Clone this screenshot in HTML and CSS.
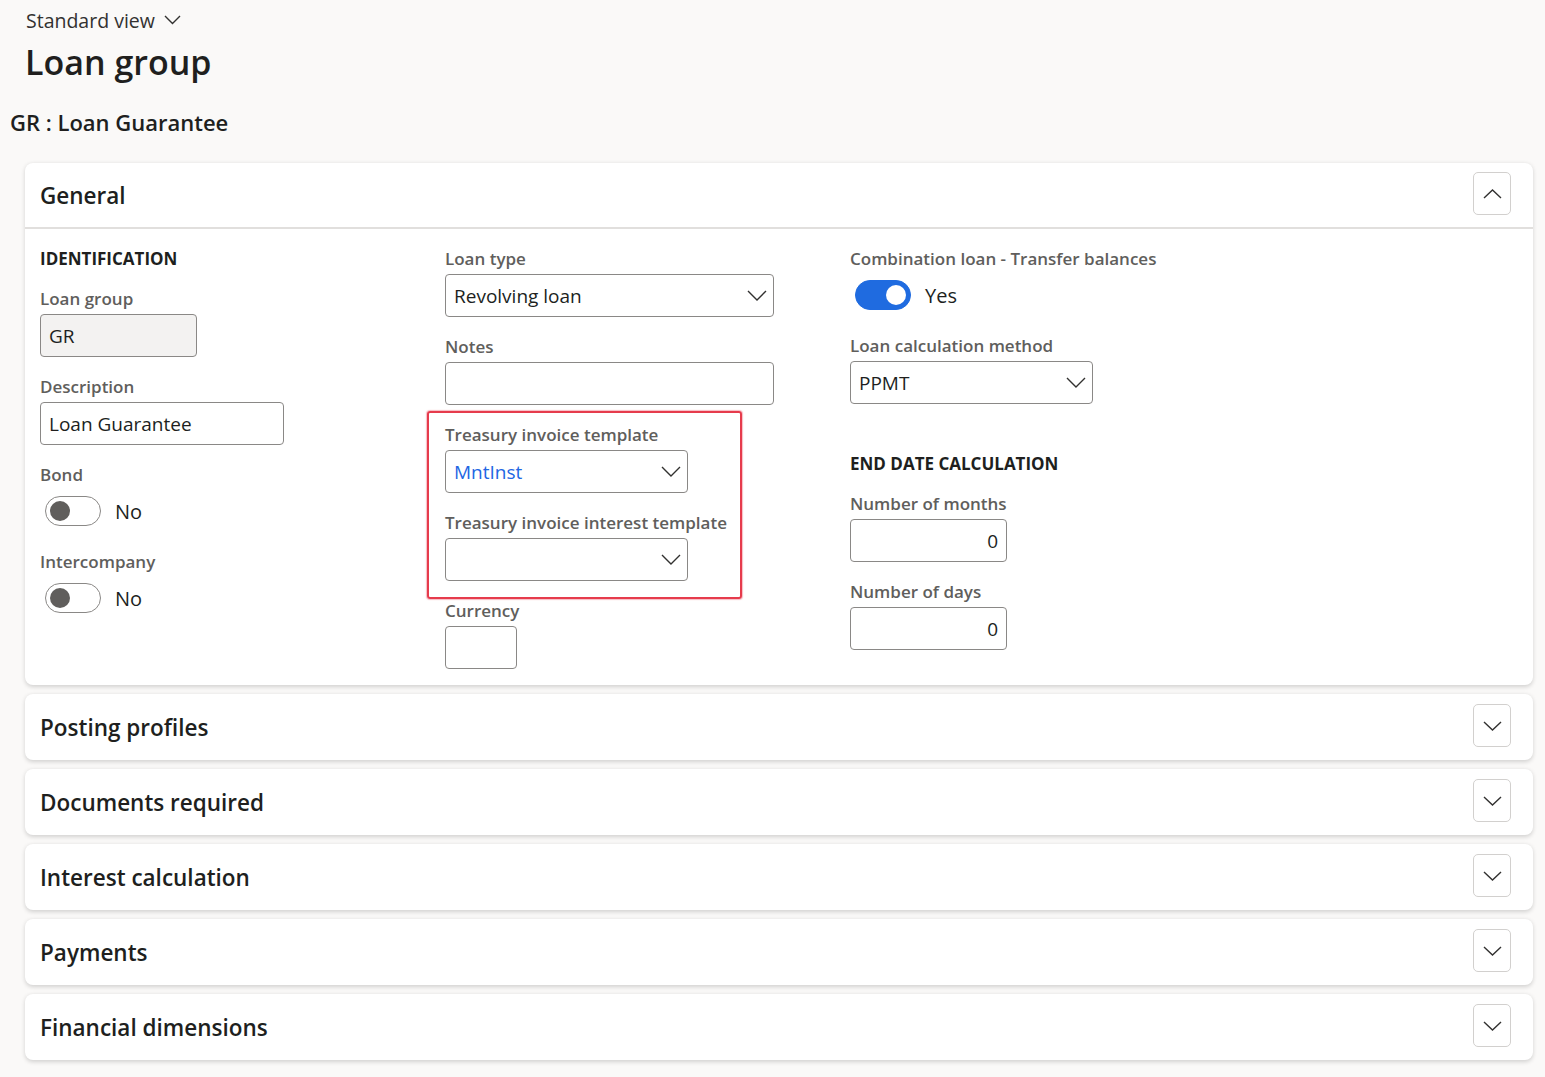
FILE: index.html
```html
<!DOCTYPE html>
<html>
<head>
	<title>Loan group</title>
	<link rel="stylesheet" href="styles.css">
</head>
<body>
<div class="page">
	<div class="view">Standard view
		<svg class="chev" width="17" height="10" viewBox="0 0 17 10"><polyline points="1,1 8.5,8.5 16,1"/></svg>
	</div>
	<h1 class="title">Loan group</h1>
	<h2 class="record">GR : Loan Guarantee</h2>

	<section class="card">
		<div class="card-head">
			<span class="card-title">General</span>
			<button class="fold"><svg width="19" height="10" viewBox="0 0 19 10"><polyline points="1,9 9.5,1 18,9"/></svg></button>
		</div>
		<div class="card-body">
			<div class="col">
				<div class="group-title">IDENTIFICATION</div>
				<div class="field">
					<label>Loan group</label>
					<div class="input disabled w157">GR</div>
				</div>
				<div class="field">
					<label>Description</label>
					<div class="input w244">Loan Guarantee</div>
				</div>
				<div class="field">
					<label>Bond</label>
					<div class="switch-row"><span class="switch"><span class="knob"></span></span><span>No</span></div>
				</div>
				<div class="field">
					<label>Intercompany</label>
					<div class="switch-row"><span class="switch"><span class="knob"></span></span><span>No</span></div>
				</div>
			</div>

			<div class="col">
				<div class="field">
					<label>Loan type</label>
					<div class="input select w329">Revolving loan
						<svg width="20" height="11" viewBox="0 0 20 11"><polyline points="1,1 10,10 19,1"/></svg></div>
				</div>
				<div class="field">
					<label>Notes</label>
					<div class="input w329"></div>
				</div>
				<div class="marked">
					<div class="field">
						<label>Treasury invoice template</label>
						<div class="input select w243 link">MntInst
							<svg width="20" height="11" viewBox="0 0 20 11"><polyline points="1,1 10,10 19,1"/></svg></div>
					</div>
					<div class="field">
						<label>Treasury invoice interest template</label>
						<div class="input select w243">
							<svg width="20" height="11" viewBox="0 0 20 11"><polyline points="1,1 10,10 19,1"/></svg></div>
					</div>
					<div class="mark"></div>
				</div>
				<div class="field">
					<label>Currency</label>
					<div class="input w72"></div>
				</div>
			</div>

			<div class="col">
				<div class="field">
					<label>Combination loan - Transfer balances</label>
					<div class="switch-row"><span class="switch on"><span class="knob"></span></span><span>Yes</span></div>
				</div>
				<div class="field">
					<label>Loan calculation method</label>
					<div class="input select w243">PPMT
						<svg width="20" height="11" viewBox="0 0 20 11"><polyline points="1,1 10,10 19,1"/></svg></div>
				</div>
				<div class="group-title spaced">END DATE CALCULATION</div>
				<div class="field">
					<label>Number of months</label>
					<div class="input num w157">0</div>
				</div>
				<div class="field">
					<label>Number of days</label>
					<div class="input num w157">0</div>
				</div>
			</div>
		</div>
	</section>

	<section class="card">
		<div class="card-head closed">
			<span class="card-title">Posting profiles</span>
			<button class="fold"><svg width="19" height="10" viewBox="0 0 19 10"><polyline points="1,1 9.5,9 18,1"/></svg></button>
		</div>
	</section>
	<section class="card">
		<div class="card-head closed">
			<span class="card-title">Documents required</span>
			<button class="fold"><svg width="19" height="10" viewBox="0 0 19 10"><polyline points="1,1 9.5,9 18,1"/></svg></button>
		</div>
	</section>
	<section class="card">
		<div class="card-head closed">
			<span class="card-title">Interest calculation</span>
			<button class="fold"><svg width="19" height="10" viewBox="0 0 19 10"><polyline points="1,1 9.5,9 18,1"/></svg></button>
		</div>
	</section>
	<section class="card">
		<div class="card-head closed">
			<span class="card-title">Payments</span>
			<button class="fold"><svg width="19" height="10" viewBox="0 0 19 10"><polyline points="1,1 9.5,9 18,1"/></svg></button>
		</div>
	</section>
	<section class="card">
		<div class="card-head closed">
			<span class="card-title">Financial dimensions</span>
			<button class="fold"><svg width="19" height="10" viewBox="0 0 19 10"><polyline points="1,1 9.5,9 18,1"/></svg></button>
		</div>
	</section>
</div>
</body>
</html>
```

FILE: styles.css
```css
html {
	background: #faf9f8;
}

body {
	margin: 0;
	font-family: "Open Sans", "Noto Sans", sans-serif;
	color: #201f1e;
}

.page {
	padding: 0 12px 20px 10px;
}

.view {
	display: flex;
	align-items: center;
	gap: 9px;
	margin: 0 0 0 16px;
	padding-top: 6px;
	height: 28px;
	font-size: 19.5px;
	color: #323130;
}

.chev polyline, .fold polyline, .select polyline {
	fill: none;
	stroke: #323130;
	stroke-width: 1.4;
}

.title {
	margin: 4px 0 0 15px;
	font-size: 34px;
	line-height: 48px;
	font-weight: 600;
}

.record {
	margin: 20px 0 0 0;
	font-size: 22px;
	line-height: 32px;
	font-weight: 600;
}

.card {
	margin: 25px 0 0 15px;
	background: white;
	border-radius: 8px;
	box-shadow: 0 1.5px 4px rgba(0, 0, 0, 0.16);
}

.card + .card {
	margin-top: 9px;
}

.card-head {
	display: flex;
	align-items: center;
	justify-content: space-between;
	height: 64px;
	padding: 0 22px 0 15px;
	border-bottom: 2px solid #e1dfdd;
}

.card-head.closed {
	height: 66px;
	border-bottom: none;
}

.card-title {
	font-size: 22.5px;
	font-weight: 600;
}

.fold {
	display: flex;
	align-items: center;
	justify-content: center;
	width: 38px;
	height: 43px;
	margin-top: -3px;
	background: white;
	border: 1px solid #d2d0ce;
	border-radius: 5px;
	padding: 0;
}

.card-body {
	display: grid;
	grid-template-columns: 405px 405px 405px;
	padding: 16px 15px 0;
}

.group-title {
	font-size: 17px;
	font-weight: 700;
	line-height: 27px;
	margin-bottom: 13px;
}

.group-title.spaced {
	margin-top: 46px;
}

.field {
	margin-bottom: 16px;
}

.field label {
	display: block;
	font-size: 17px;
	font-weight: 600;
	line-height: 27px;
	margin-bottom: 2px;
	color: #605e5c;
}

.input {
	box-sizing: border-box;
	display: flex;
	align-items: center;
	height: 43px;
	padding: 0 8px;
	border: 1px solid #8a8886;
	border-radius: 4px;
	font-size: 19px;
	background: white;
}

.input.disabled {
	background: #f3f2f1;
}

.select {
	justify-content: space-between;
	padding-right: 6px;
}

.select svg {
	margin-left: auto;
}

.link {
	color: #2266e3;
}

.num {
	justify-content: flex-end;
}

.w72 { width: 72px; }
.w157 { width: 157px; }
.w243 { width: 243px; }
.w244 { width: 244px; }
.w329 { width: 329px; }

.switch-row {
	display: flex;
	align-items: center;
	gap: 14px;
	height: 42px;
	padding-left: 5px;
	font-size: 20px;
}

.switch {
	box-sizing: border-box;
	display: flex;
	align-items: center;
	width: 56px;
	height: 30px;
	padding: 0 4px;
	border: 1px solid #8a8886;
	border-radius: 15px;
}

.knob {
	width: 20px;
	height: 20px;
	border-radius: 50%;
	background: #605e5c;
}

.switch.on {
	background: #1f6be0;
	border-color: #1f6be0;
	justify-content: flex-end;
}

.switch.on .knob {
	background: white;
}

.marked {
	position: relative;
	width: 297px;
}

.mark {
	position: absolute;
	left: -18px;
	top: -10px;
	width: 315px;
	height: 188px;
	box-sizing: border-box;
	border: 2px solid #e63b4c;
	border-radius: 3px;
	box-shadow: 0 0 1px 1px rgba(240, 120, 135, 0.5);
}
```
